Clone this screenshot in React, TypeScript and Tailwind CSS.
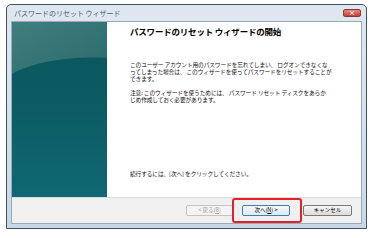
import React from 'react';

const jp = { fontFamily: '"Noto Sans CJK JP", "Noto Sans", sans-serif' };

const SidePanel = () => (
  <svg width="95" height="175" viewBox="0 0 95 175" className="block">
    <defs>
      <linearGradient id="base" x1="0" y1="0" x2="0" y2="1">
        <stop offset="0" stopColor="#0b555c" />
        <stop offset="0.5" stopColor="#0c5c64" />
        <stop offset="1" stopColor="#0f6874" />
      </linearGradient>
      <linearGradient id="sheen" x1="0" y1="0" x2="1" y2="1">
        <stop offset="0" stopColor="#3f7f7e" />
        <stop offset="1" stopColor="#2a6b6c" />
      </linearGradient>
    </defs>
    <rect width="95" height="175" fill="url(#base)" />
    <path d="M0 0 H95 V36 C60 34 20 40 0 52 Z" fill="url(#sheen)" />
  </svg>
);

const Line = ({ children }: { children: React.ReactNode }) => (
  <div className="whitespace-nowrap text-[5.7px] leading-[7px] text-[#111] tracking-[-0.1px]">{children}</div>
);

const App = () => {
  return (
    <div className="w-[371px] h-[238px] bg-white relative overflow-hidden" style={jp}>
      <div className="absolute left-0 top-0 w-[371px] h-[238px] pointer-events-none">
        <div className="absolute left-[232px] top-[198px] w-[70px] h-[25px] border-2 border-[#e3202b] rounded-[3px]" />
      </div>
      <div className="ml-[6px] mt-[4px] w-[361px] h-[225px] border border-[#44525f] rounded-t-[5px] bg-gradient-to-b from-[#dfe8f1] to-[#c8d8e9] flex flex-col px-[4px] pb-[4px]">
        <div className="h-[17px] flex items-center justify-between pl-[3px] pr-[1px]">
          <span className="text-[7px] leading-none text-[#4b5866]">パスワードのリセット ウィザード</span>
          <div className="w-[18px] h-[8px] rounded-[2px] bg-gradient-to-b from-[#e08a7e] to-[#c33d2f] border border-[#8a3a30] flex items-center justify-center">
            <span className="text-[6px] leading-none font-bold text-white">×</span>
          </div>
        </div>
        <div className="flex-1 flex flex-col border border-[#9aaabb]">
          <div className="flex-1 flex">
            <div className="w-[95px] shrink-0">
              <SidePanel />
            </div>
            <div className="flex-1 bg-white flex flex-col pl-[23px] pt-[3px] pb-[20px]">
              <div className="text-[8.5px] leading-[12px] font-bold text-black tracking-[-0.2px]">パスワードのリセット ウィザードの開始</div>
              <div className="mt-[24px]">
                <Line>このユーザー アカウント用のパスワードを忘れてしまい、 ログオンできなくな</Line>
                <Line>ってしまった場合は、 このウィザードを使ってパスワードをリセットすることが</Line>
                <Line>できます。</Line>
              </div>
              <div className="mt-[7px]">
                <Line>注意: このウィザードを使うためには、 パスワード リセット ディスクをあらか</Line>
                <Line>じめ作成しておく必要があります。</Line>
              </div>
              <div className="mt-auto">
                <Line>続行するには、[次へ] をクリックしてください。</Line>
              </div>
            </div>
          </div>
          <div className="h-[26px] bg-[#f0f0f0] border-t border-[#dcdcdc] flex items-center justify-end pr-[9px]">
            <div className="w-[47px] h-[11px] border border-[#c4c4c4] rounded-[2px] bg-[#f4f4f4] flex items-center justify-center text-[5.5px] leading-none text-[#a3a3a3]">
              &lt; 戻る(<span className="underline">B</span>)
            </div>
            <div className="ml-[9px] w-[48px] h-[11px] border border-[#3c7fb1] rounded-[2px] bg-gradient-to-b from-[#f4f9fc] to-[#dde9f2] flex items-center justify-center text-[5.5px] leading-none text-black">
              次へ(<span className="underline">N</span>) &gt;
            </div>
            <div className="ml-[13px] w-[49px] h-[11px] border border-[#7a7a7a] rounded-[2px] bg-gradient-to-b from-[#f6f6f6] to-[#dcdcdc] flex items-center justify-center text-[5.5px] leading-none text-black">
              キャンセル
            </div>
          </div>
        </div>
      </div>
    </div>
  );
};

export default App;
